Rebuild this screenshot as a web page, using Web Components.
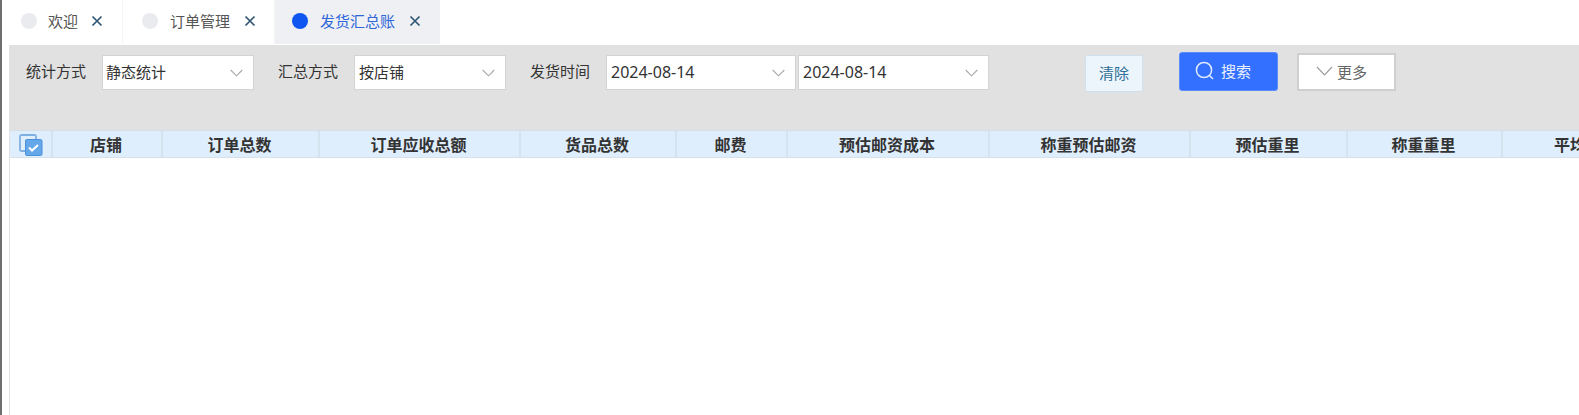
<!DOCTYPE html>
<html lang="zh">
<head>
<meta charset="utf-8">
<title>发货汇总账</title>
<style>
  html, body { margin: 0; height: 100%; background: #fff; overflow: hidden; }
  body { font: 15px "Noto Sans CJK SC", "Noto Sans", sans-serif; color: #333; }
</style>
</head>
<body>
<app-shell>
  <tab-bar slot="tabs">
    <tab-item style="--w:123px;--pad:21px;--gap:11px;--x:13px">欢迎</tab-item>
    <tab-item style="--w:152px;--pad:19px;--gap:12px">订单管理</tab-item>
    <tab-item style="--w:165px;--pad:17px;--gap:12px" active>发货汇总账</tab-item>
  </tab-bar>
  <filter-bar slot="filters">
    <filter-label>统计方式</filter-label>
    <filter-select style="--w:152px;--pad:3px">静态统计</filter-select>
    <filter-label style="margin-left:24px">汇总方式</filter-label>
    <filter-select style="--w:152px">按店铺</filter-select>
    <filter-label style="margin-left:24px">发货时间</filter-label>
    <filter-select style="--w:190px" date>2024-08-14</filter-select>
    <filter-select style="--w:191px;margin-left:2px" date>2024-08-14</filter-select>
    <clear-button style="margin-left:96px">清除</clear-button>
    <search-button style="margin-left:36px">搜索</search-button>
    <more-button style="margin-left:19px">更多</more-button>
  </filter-bar>
  <data-table slot="table"></data-table>
</app-shell>

<script>
class AppShell extends HTMLElement {
  constructor() {
    super()
    this.attachShadow({ mode: "open" }).innerHTML = `
      <style>
        :host { display: flex; flex-direction: column; height: 415px; border-left: 2px solid #6e6e6e; overflow: hidden; }
        .main { flex: 1; margin: 1px 0 0 7px; display: flex; flex-direction: column; min-width: 0; border-left: 1px solid #e2e2e2; }
      </style>
      <slot name="tabs"></slot>
      <div class="main">
        <slot name="filters"></slot>
        <slot name="table"></slot>
      </div>`
  }
}

class TabBar extends HTMLElement {
  constructor() {
    super()
    this.attachShadow({ mode: "open" }).innerHTML = `
      <style>:host { display: flex; height: 44px; margin-left: -2px; }</style>
      <slot></slot>`
  }
}

class TabItem extends HTMLElement {
  constructor() {
    super()
    this.attachShadow({ mode: "open" }).innerHTML = `
      <style>
        :host { display: flex; align-items: center; box-sizing: border-box; width: var(--w); height: 44px; padding: 0 0 3px var(--pad); font-size: 15px; color: #555; border-right: 1px solid #f5f5f5; }
        :host([active]) { background: #eef0f4; color: #2f66d8; border-right: 0; }
        .dot { width: 16px; height: 16px; border-radius: 50%; background: #e9ebef; margin-right: var(--gap); flex: none; }
        :host([active]) .dot { background: #0f56f0; }
        svg { margin-left: var(--x, 14px); flex: none; }
      </style>
      <span class="dot"></span>
      <slot></slot>
      <svg width="12" height="12" viewBox="0 0 12 12"><path d="M1.5 1.5l9 9M10.5 1.5l-9 9" stroke="#2f5674" stroke-width="1.7" fill="none"/></svg>`
  }
}

class FilterBar extends HTMLElement {
  constructor() {
    super()
    this.attachShadow({ mode: "open" }).innerHTML = `
      <style>
        :host { display: flex; align-items: flex-start; box-sizing: border-box; height: 85px; padding: 7px 0 0 16px; background: #e1e1e1; }
      </style>
      <slot></slot>`
  }
}

class FilterLabel extends HTMLElement {
  constructor() {
    super()
    this.attachShadow({ mode: "open" }).innerHTML = `
      <style>:host { display: block; width: 60px; margin-right: 16px; margin-top: 2px; height: 34px; line-height: 34px; font-size: 15px; color: #333; white-space: nowrap; }</style>
      <slot></slot>`
  }
}

class FilterSelect extends HTMLElement {
  constructor() {
    super()
    this.attachShadow({ mode: "open" }).innerHTML = `
      <style>
        :host { display: flex; align-items: center; justify-content: space-between; box-sizing: border-box; width: var(--w); height: 35px; margin-top: 3px; padding: 0 10px 2px var(--pad, 4px); background: #fff; border: 1px solid #d4d4d4; font-size: 15px; color: #333; }
        :host([date]) { font-family: "Noto Sans", sans-serif; font-size: 16px; }
        svg { position: relative; top: 1px; }
      </style>
      <slot></slot>
      <svg width="13" height="8" viewBox="0 0 13 8"><path d="M.7 1l5.8 5.8L12.3 1" stroke="#a8a8a8" stroke-width="1.1" fill="none"/></svg>`
  }
}

class ClearButton extends HTMLElement {
  constructor() {
    super()
    this.attachShadow({ mode: "open" }).innerHTML = `
      <style>
        :host { display: flex; align-items: center; justify-content: center; box-sizing: border-box; width: 58px; height: 37px; margin-top: 3px; padding-bottom: 2px; background: #edf5fc; border: 1px solid #cfe0ee; border-radius: 2px; font-size: 15px; color: #2f6f97; }
      </style>
      <slot></slot>`
  }
}

class SearchButton extends HTMLElement {
  constructor() {
    super()
    this.attachShadow({ mode: "open" }).innerHTML = `
      <style>
        :host { display: flex; align-items: center; box-sizing: border-box; width: 99px; height: 39px; padding: 0 0 2px 15px; background: #3370ff; border: 1px solid #5a8cff; border-radius: 3px; font-size: 15px; color: #eaf1ff; }
        svg { margin-right: 6px; }
      </style>
      <svg width="20" height="20" viewBox="0 0 20 20"><circle cx="9" cy="9" r="7.6" stroke="#dfe9ff" stroke-width="1.5" fill="none"/><path d="M14.6 14.6l3.4 3.4" stroke="#dfe9ff" stroke-width="1.5" fill="none"/></svg>
      <slot></slot>`
  }
}

class MoreButton extends HTMLElement {
  constructor() {
    super()
    this.attachShadow({ mode: "open" }).innerHTML = `
      <style>
        :host { display: flex; align-items: center; box-sizing: border-box; width: 99px; height: 38px; margin-top: 1px; padding: 0 0 2px 17px; background: #fff; border: 2px solid #cfcfcf; font-size: 15px; color: #666; }
        svg { margin-right: 4px; }
      </style>
      <svg width="17" height="10" viewBox="0 0 17 10"><path d="M1 1l7.5 8L16 1" stroke="#999" stroke-width="1.1" fill="none"/></svg>
      <slot></slot>`
  }
}

const columns = [
  ["店铺", 110], ["订单总数", 157], ["订单应收总额", 201], ["货品总数", 156], ["邮费", 111],
  ["预估邮资成本", 202], ["称重预估邮资", 201], ["预估重里", 157], ["称重重里", 155], ["平均", 138]
]

class DataTable extends HTMLElement {
  constructor() {
    super()
    const cols = columns.map((c) => c[1] + "px").join(" ")
    const cells = columns.map((c) => `<div class="cell">${c[0]}</div>`).join("")
    this.attachShadow({ mode: "open" }).innerHTML = `
      <style>
        :host { display: block; flex: 1; background: #fff; overflow: hidden; }
        .head { display: grid; grid-template-columns: 41px ${cols}; height: 28px; box-sizing: border-box; background: #dfeefd; border-top: 1px solid #d4dfe8; border-bottom: 1px solid #d6e1ea; }
        .cell { display: flex; align-items: center; justify-content: center; box-shadow: inset 2px 0 #d5e3ef; font: 700 16px "Liberation Serif", "Noto Sans CJK SC", serif; color: #333; white-space: nowrap; }
        .check { display: flex; align-items: center; justify-content: center; padding: 1px 0 0 1px; }
      </style>
      <div class="head">
        <div class="check">
          <svg width="24" height="22" viewBox="0 0 24 22">
            <rect x="1" y="1" width="16" height="16" rx="1.5" fill="#dfeefd" stroke="#7fb0e2" stroke-width="1.8"/>
            <rect x="6.5" y="5.5" width="16.5" height="16" rx="1.5" fill="#64a8ea" stroke="#4a90da" stroke-width="1"/>
            <path d="M10 13.5l3 3 6-5.5" stroke="#fff" stroke-width="2" fill="none"/>
          </svg>
        </div>
        ${cells}
      </div>`
  }
}

customElements.define("app-shell", AppShell)
customElements.define("tab-bar", TabBar)
customElements.define("tab-item", TabItem)
customElements.define("filter-bar", FilterBar)
customElements.define("filter-label", FilterLabel)
customElements.define("filter-select", FilterSelect)
customElements.define("clear-button", ClearButton)
customElements.define("search-button", SearchButton)
customElements.define("more-button", MoreButton)
customElements.define("data-table", DataTable)
</script>
</body>
</html>
